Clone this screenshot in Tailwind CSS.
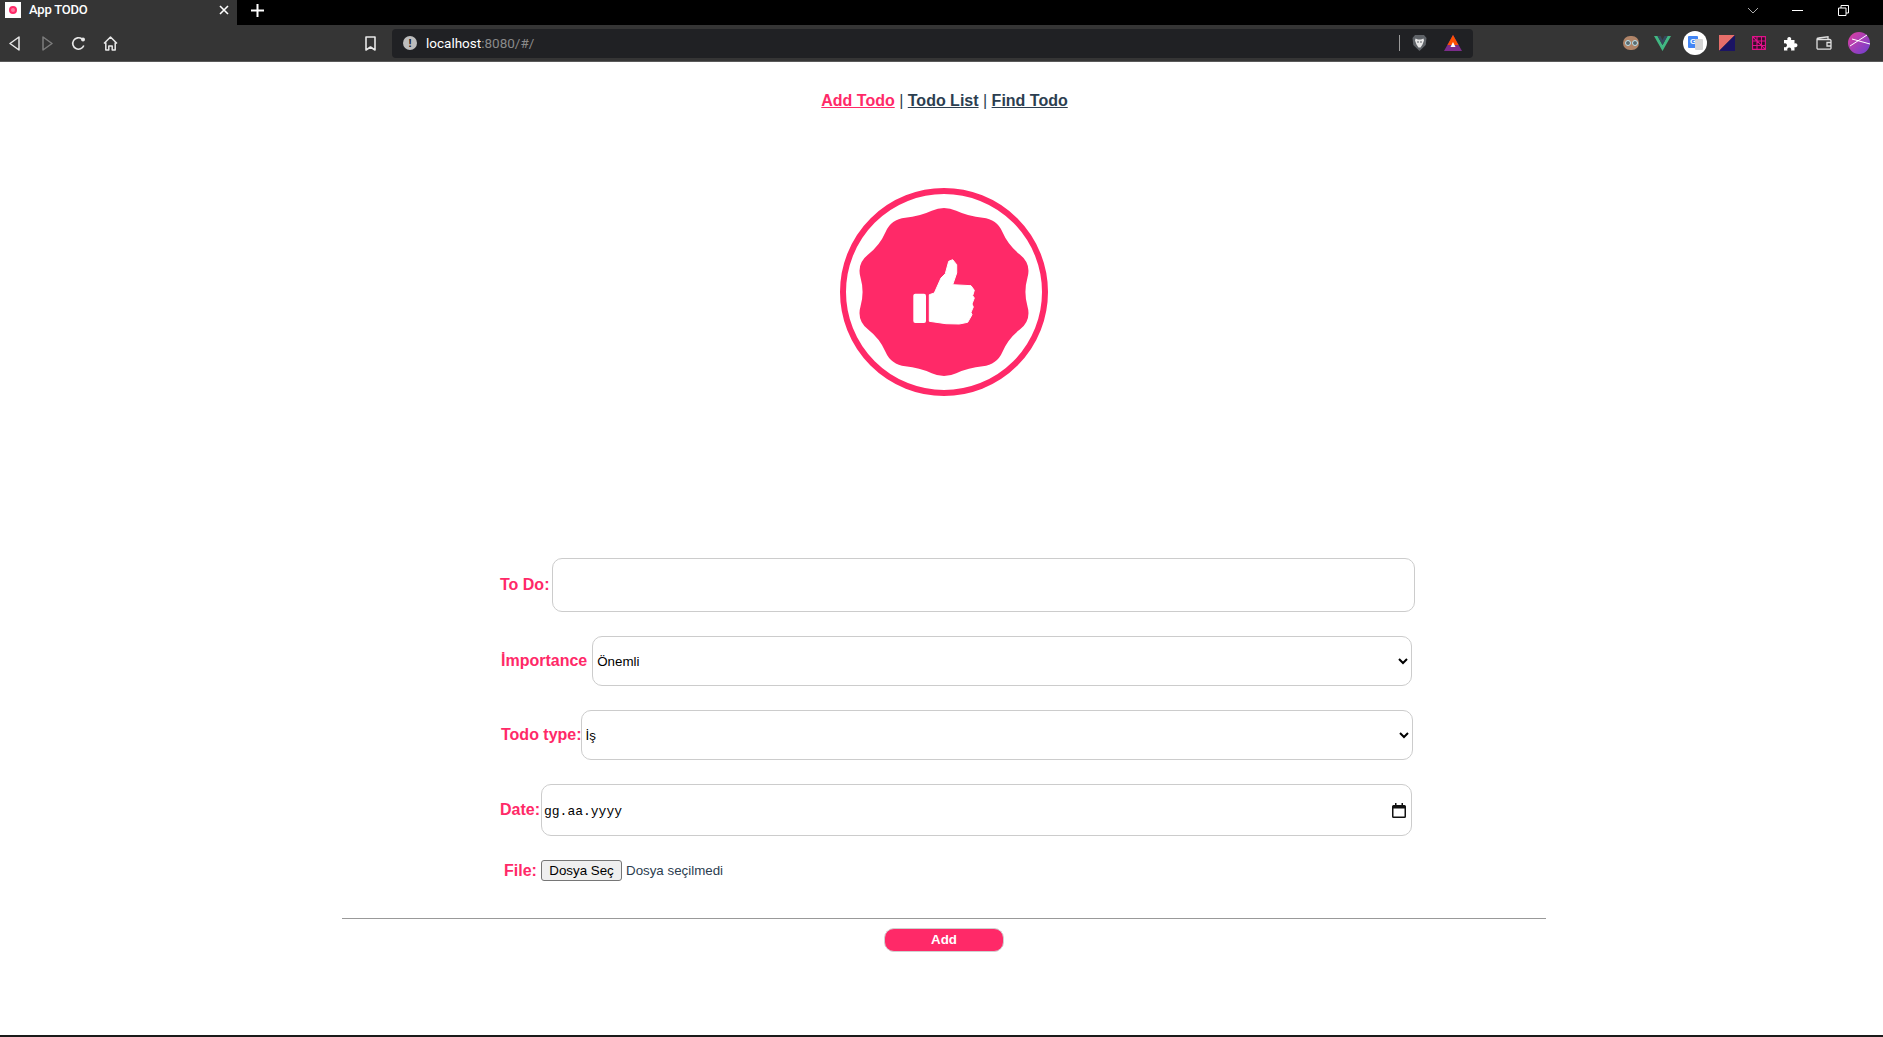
<!DOCTYPE html>
<html lang="tr">
<head>
    <meta charset="UTF-8">
    <meta name="viewport" content="width=device-width, initial-scale=1.0">
    <title>App TODO</title>
    <script src="https://cdn.jsdelivr.net/npm/@tailwindcss/browser@4"></script>
</head>
<body class="h-screen overflow-hidden flex flex-col bg-white font-['Liberation_Sans',Arial,sans-serif] text-[#2c3e50]">

    <!-- tab strip -->
    <div class="h-[25px] shrink-0 bg-black flex items-center text-white">
        <div class="w-[237px] h-full bg-[#353535] flex items-center pl-[5px] pr-[8px] pb-[5px]">
            <div class="w-[16px] h-[16px] bg-white flex items-center justify-center">
                <div class="w-[8px] h-[8px] rounded-full border-[2px] border-[#ff2968] bg-[#ff7aa0]"></div>
            </div>
            <span class="ml-[8px] text-[13px] font-medium font-['Roboto',sans-serif] tracking-[-0.2px]">App TODO</span>
            <svg class="ml-auto" width="10" height="10" viewBox="0 0 10 10" fill="none" stroke="#fff" stroke-width="1.6"><path d="M1 1l8 8M9 1l-8 8"/></svg>
        </div>
        <svg class="ml-[14px] mb-[5px]" width="13" height="13" viewBox="0 0 13 13" fill="none" stroke="#fff" stroke-width="2"><path d="M6.500 0v13M0 6.500h13"/></svg>
        <svg class="ml-[1483px] mb-[5px]" width="12" height="7" viewBox="0 0 12 7" fill="none" stroke="#aaa" stroke-width="1"><path d="M1 1l5 5 5-5"/></svg>
        <div class="ml-[33px] mb-[5px] w-[11px] h-[1px] bg-white"></div>
        <svg class="ml-[35px] mb-[5px]" width="11" height="11" viewBox="0 0 11 11" fill="none" stroke="#fff" stroke-width="1"><path d="M.5 3h7.500v7.500h-7.500zM3 3V.5h7.500V8H8"/></svg>
    </div>

    <!-- toolbar -->
    <div class="h-[37px] shrink-0 bg-[#353535] border-b border-[#5a5a5a] flex items-center">
        <svg class="ml-[9px]" width="11" height="15" viewBox="0 0 11 15" fill="none" stroke="#e8e8e8" stroke-width="1.5" stroke-linejoin="round"><path d="M10 1v13L1 7.500z"/></svg>
        <svg class="ml-[22px]" width="11" height="15" viewBox="0 0 11 15" fill="none" stroke="#7c7c7c" stroke-width="1.5" stroke-linejoin="round"><path d="M1 1v13l9-6.500z"/></svg>
        <svg class="ml-[18px]" width="15" height="15" viewBox="0 0 15 15" fill="none" stroke="#e8e8e8" stroke-width="1.6"><path d="M12.800 9.500A5.700 5.700 0 1 1 11 3"/><circle cx="12" cy="3.500" r="2" fill="#e8e8e8" stroke="none"/></svg>
        <svg class="ml-[17px]" width="15" height="15" viewBox="0 0 15 15" fill="none" stroke="#e8e8e8" stroke-width="1.5" stroke-linejoin="round"><path d="M1 7.500L7.500 1 14 7.500M2.800 6.500V14h3v-4h3.400v4h3V6.500"/></svg>
        <svg class="ml-[247px]" width="11" height="15" viewBox="0 0 11 15" fill="none" stroke="#e8e8e8" stroke-width="1.6" stroke-linejoin="round"><path d="M1 1h9v13l-4.500-3L1 14z"/></svg>
        <div class="ml-[16px] w-[1081px] h-[29px] rounded-[4px] bg-[#202124] flex items-center">
            <div class="ml-[11px] w-[14px] h-[14px] rounded-full bg-[#bdbdbd] flex items-center justify-center text-[#202124] text-[11px] font-bold leading-none">!</div>
            <span class="ml-[9px] text-[13.5px] text-white font-['Roboto',sans-serif]">localhost<span class="text-[#8a8a8a]">:8080/#/</span></span>
            <div class="ml-auto w-[1px] h-[16px] bg-[#9a9a9a]"></div>
            <svg class="ml-[12px]" width="15" height="18" viewBox="0 0 15 18"><path d="M3 1h9l2.500 3-.8 7L7.500 17 1.300 11 .5 4z" fill="#5f6368"/><path d="M3.500 4.500L6 5.500h3l2.500-1 .5 2-1.500 4-2 3h-2l-2-3-1.500-4z" fill="#e8e8e8"/><path d="M5 8h2M8 8h2" stroke="#5f6368" stroke-width="1"/></svg>
            <svg class="ml-[17px] mr-[11px]" width="18" height="16" viewBox="0 0 18 16"><path d="M9 0l9 16H0z" fill="#7b2d8b"/><path d="M9 0l5.500 10h-11z" fill="#ff5000"/><path d="M9 7l2.500 5h-5z" fill="#fff"/></svg>
        </div>
        <div class="ml-[150px] w-[16px] h-[14px] rounded-full bg-[#b08468] flex items-center justify-center gap-[1px]">
            <div class="w-[6px] h-[6px] rounded-full border border-[#bfe3ee] bg-[#5b6b70]"></div>
            <div class="w-[6px] h-[6px] rounded-full border border-[#bfe3ee] bg-[#5b6b70]"></div>
        </div>
        <svg class="ml-[15px]" width="17" height="15" viewBox="0 0 17 15"><path d="M0 0h3.500l5 9 5-9H17L8.500 15z" fill="#41b883"/><path d="M3.500 0h3l2 4 2-4h3l-5 9z" fill="#35495e"/></svg>
        <div class="ml-[12px] w-[24px] h-[24px] rounded-full bg-white flex items-center justify-center relative">
            <div class="absolute left-[5px] top-[5px] w-[10px] h-[12px] rounded-[1px] bg-[#4285f4] text-white text-[8px] font-bold leading-[12px] text-center">G</div>
            <div class="absolute left-[12px] top-[8px] w-[8px] h-[11px] rounded-[1px] bg-[#d4d4d4]"></div>
        </div>
        <svg class="ml-[12px]" width="16" height="16" viewBox="0 0 16 16"><path d="M0 0h16L0 16z" fill="#e66e6a"/><path d="M16 0v16H0z" fill="#1b1464"/></svg>
        <svg class="ml-[17px]" width="14" height="14" viewBox="0 0 14 14" fill="#35102a" stroke="#e0128a" stroke-width="1.1"><path d="M.6.6h12.800v12.800H.6zM.6 5h12.800M.6 9.500h12.800M5 .6v12.800M9.500.6v12.800M.6.6l12.800 12.800"/></svg>
        <svg class="ml-[17px]" width="15" height="15" viewBox="0 0 15 15" fill="#fff"><path d="M1 4h3.500a2 2 0 1 1 3.500 0h3.500v3.500a2 2 0 1 1 0 3.500V14.500H8a2 2 0 1 0-3.500 0H1v-3.500a2 2 0 1 0 0-3.500z"/></svg>
        <svg class="ml-[18px]" width="16" height="14" viewBox="0 0 16 14" fill="none" stroke="#e0e0e0" stroke-width="1.300"><path d="M1 3.500A1.500 1.500 0 0 1 2.500 2L12 .8V3.500M1 3.500V12a1.200 1.200 0 0 0 1.200 1.200h11.600A1.200 1.200 0 0 0 15 12V4.700a1.200 1.200 0 0 0-1.200-1.200zM15 6.500h-4v3.500h4"/></svg>
        <svg class="ml-[16px]" width="22" height="22" viewBox="0 0 22 22"><defs><linearGradient id="ava" x1="0" y1="0" x2="1" y2="1"><stop offset="0" stop-color="#e23fa0"/><stop offset="1" stop-color="#6a3fd0"/></linearGradient></defs><circle cx="11" cy="11" r="11" fill="url(#ava)"/><path d="M2 14L19 3M4 7l18 5" stroke="#fff" stroke-width="1" fill="none"/></svg>
    </div>

    <!-- page -->
    <div class="flex-1 pl-[5px] flex flex-col">
        <nav class="pt-[30px] pl-[1px] text-center text-[16px] leading-[18px]">
            <a href="#/" class="font-bold underline text-[#ff2968]">Add Todo</a> |
            <a href="#/list" class="font-bold underline">Todo List</a> |
            <a href="#/find" class="font-bold underline">Find Todo</a>
        </nav>

        <svg class="mx-auto mt-[78px] shrink-0" width="208" height="208" viewBox="0 0 208 208">
            <circle cx="104" cy="104" r="101" fill="none" stroke="#ff2968" stroke-width="6"/>
            <path fill="#ff2968" d="M91.750 22.850Q104 17.200 116.250 22.850T142.700 29.850T162.550 44.250T179.850 66.450T187.450 89.800T187.450 118.200T179.850 141.550T162.550 163.750T142.700 178.150T116.250 185.150T91.750 185.150T65.300 178.150T45.450 163.750T28.150 141.550T20.550 118.200T20.550 89.800T28.150 66.450T45.450 44.250T65.300 29.850T91.750 22.850Z"/>
            <rect x="73.300" y="105.700" width="12.700" height="29.300" rx="2" fill="#fff"/>
            <path fill="#fff" stroke="#fff" stroke-width="1" stroke-linejoin="round" d="M89.300 106.700L94.300 105L101 90L105.300 85.700L108.700 73.300L112.700 71.700L116.700 76.700L116.700 85L112.700 96.700L131 97.700L134.300 102.300L132.700 107.700L134.300 110L132 116L133.300 119L131 124.300L132 126.700L127.700 134.300L119.300 136L106 135.700L89.300 133.300Z"/>
        </svg>

        <form class="flex flex-col">
            <div class="mt-[162px] flex items-center pl-[495px]">
                <label for="todo" class="text-[16px] font-bold text-[#ff2968] mr-[3px]">To Do:</label>
                <input id="todo" type="text" class="w-[863px] h-[54px] px-[4px] border border-[#cccccc] rounded-[10px] bg-white outline-none">
            </div>
            <div class="mt-[24px] flex items-center pl-[496px]">
                <label for="importance" class="text-[16px] font-bold text-[#ff2968] mr-[5px]">İmportance</label>
                <select id="importance" class="w-[820px] h-[50px] border border-[#cccccc] rounded-[10px] bg-white text-[13.33px] text-black">
                    <option>Önemli</option>
                </select>
            </div>
            <div class="mt-[24px] flex items-center pl-[496px]">
                <label for="type" class="text-[16px] font-bold text-[#ff2968]">Todo type:</label>
                <select id="type" class="-ml-[1px] w-[832px] h-[50px] border border-[#cccccc] rounded-[10px] bg-white text-[13.33px] text-black">
                    <option>İş</option>
                </select>
            </div>
            <div class="mt-[24px] flex items-center pl-[495px]">
                <label class="w-[41px] text-[16px] font-bold text-[#ff2968]">Date:</label>
                <div class="w-[871px] h-[52px] border border-[#cccccc] rounded-[10px] flex items-center pl-[2px] pr-[5px]">
                    <span class="pt-[3px] text-[13px] text-black font-['Liberation_Mono',monospace]">gg.aa.yyyy</span>
                    <svg class="ml-auto" width="14" height="15" viewBox="0 0 14 15"><path d="M3 0h1.500v2h5V0H11v2h1.500A1.500 1.500 0 0 1 14 3.500v10a1.500 1.500 0 0 1-1.500 1.500h-11A1.500 1.500 0 0 1 0 13.500v-10A1.500 1.500 0 0 1 1.500 2H3zM1.500 5.500v8h11v-8z" fill="#111"/></svg>
                </div>
            </div>
            <div class="mt-[24px] flex items-center pl-[499px]">
                <label class="w-[37px] text-[16px] leading-[21px] font-bold text-[#ff2968]">File:</label>
                <button type="button" class="w-[81px] h-[21px] bg-[#efefef] border border-[#767676] rounded-[3px] text-[13.33px] text-black">Dosya Seç</button>
                <span class="ml-[4px] text-[13.33px] leading-[21px]">Dosya seçilmedi</span>
            </div>
            <hr class="mt-[37px] ml-[337px] w-[1204px] border-t border-[#999999]">
            <button type="button" class="mt-[9px] mx-auto w-[120px] h-[24px] rounded-[10px] bg-[#ff2968] border border-[#d0d0d0] text-white text-[13.33px] font-bold">Add</button>
        </form>
    </div>

    <div class="h-[2px] shrink-0 bg-[#1a1a1a]"></div>
</body>
</html>
